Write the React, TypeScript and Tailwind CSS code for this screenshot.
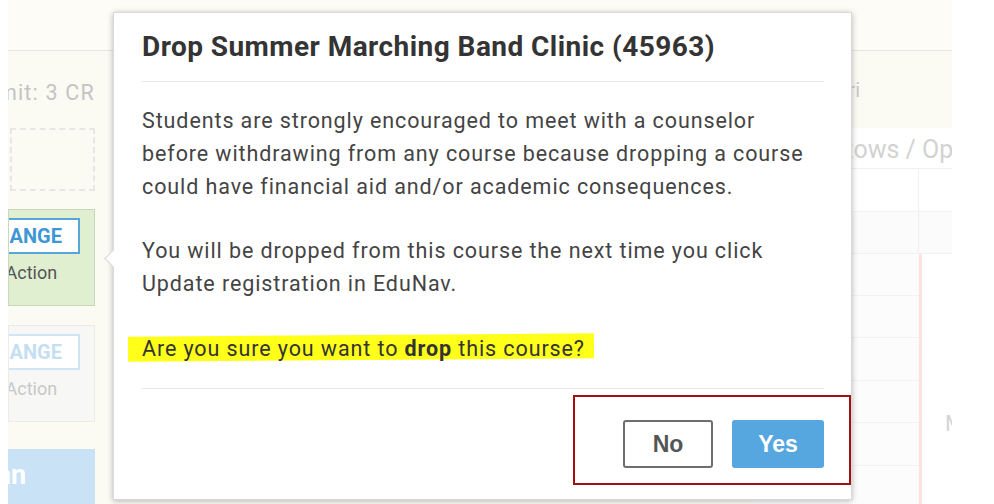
import React from "react";

export default function App() {
  return (
    <div className="relative w-[994px] h-[504px] overflow-hidden bg-white flex" style={{ fontFamily: "Roboto, 'Liberation Sans', sans-serif" }}>
      {/* left white strip */}
      <div className="w-[8px] shrink-0 bg-white" />
      {/* underlying page */}
      <div className="w-[944px] shrink-0 flex flex-col bg-[#fbfaf3] overflow-hidden">
        <div className="h-[51px] shrink-0 border-b border-[#e8e6dc] bg-[#fdfcf6]" />
        <div className="flex flex-1">
          {/* left column */}
          <div className="w-[87px] shrink-0 flex flex-col">
            <div className="h-[42px] mt-[21px] overflow-hidden flex justify-end items-center whitespace-nowrap text-[21.5px] tracking-[1.2px] text-[#c4c4c4]">
              Unit Limit: 3 CR
            </div>
            <div className="mt-[14px] ml-[2px] h-[63px] border-2 border-dashed border-[#e9e7e1]" />
            <div className="mt-[18px] h-[97px] overflow-hidden bg-[#dfefd0] border border-[#c9d8ba] flex flex-col">
              <div className="mt-[8px] ml-[-45px] w-[116px] h-[36px] shrink-0 border-2 border-[#56a6dc] bg-white flex items-center justify-center text-[20px] font-bold text-[#3f97d4] whitespace-nowrap">
                CHANGE
              </div>
              <div className="mt-[5px] ml-[-31px] text-[18px] text-[#555] whitespace-nowrap">No Action</div>
            </div>
            <div className="mt-[19px] h-[97px] overflow-hidden bg-[#f7f7f6] border border-[#ecebe8] flex flex-col">
              <div className="mt-[8px] ml-[-45px] w-[116px] h-[36px] shrink-0 border-2 border-[#cfe5f5] bg-white flex items-center justify-center text-[20px] font-bold text-[#c4dff2] whitespace-nowrap">
                CHANGE
              </div>
              <div className="mt-[5px] ml-[-31px] text-[18px] text-[#c8c8c8] whitespace-nowrap">No Action</div>
            </div>
            <div className="mt-[27px] flex-1 overflow-hidden bg-[#c9e2f5] flex items-center">
              <span className="ml-[-36px] pb-[2px] text-[27px] font-bold text-white whitespace-nowrap">Plan</span>
            </div>
          </div>
          <div className="flex-1" />
          {/* right column */}
          <div className="w-[200px] shrink-0 flex flex-col">
            <div className="h-[77px] shrink-0 flex items-center justify-end pr-[92px] text-[20px] text-[#c8c8c8] whitespace-nowrap">
              Mon Tue Wed Thu Fri
            </div>
            <div className="flex-1 bg-white flex flex-col">
              <div className="h-[40px] shrink-0 flex items-center pl-[86px] pt-[4px] text-[25px] text-[#d2d2d2] whitespace-nowrap">
                Rows / Options
              </div>
              <div className="h-[43px] shrink-0 border-t border-[#f0f0f0] flex">
                <div className="w-[167px] border-r border-[#efefef]" />
              </div>
              <div className="h-[42px] shrink-0 border-t border-[#f3f3f3] bg-[#fbfbfb] flex">
                <div className="w-[167px] border-r border-[#efefef]" />
              </div>
              <div className="flex-1 flex border-t border-[#f1f1f1]">
                <div className="w-[167px] shrink-0 flex flex-col bg-[#fcfcfc]">
                  <div className="h-[42px] border-b border-[#f2f2f2]" />
                  <div className="h-[42px] border-b border-[#f2f2f2]" />
                  <div className="h-[43px] border-b border-[#f2f2f2]" />
                  <div className="h-[42px] border-b border-[#f2f2f2]" />
                  <div className="h-[43px] border-b border-[#f2f2f2]" />
                </div>
                <div className="w-[3px] shrink-0 bg-[#fde3e0]" />
                <div className="flex-1 flex flex-col pt-[153px] pl-[23px] text-[22px] text-[#d4d4d4]">
                  M
                </div>
              </div>
            </div>
          </div>
        </div>
      </div>
      <div className="flex-1 bg-white" />

      {/* popover dialog */}
      <div className="absolute left-[113px] top-[12px] w-[739px] h-[488px] bg-white border border-[#d9d9d9] shadow-[0_1px_6px_rgba(0,0,0,0.28)] flex flex-col pl-[28px] pr-[27px]">
        <div className="absolute left-[-7px] top-[239px] w-[13px] h-[13px] bg-white border-l border-b border-[#d6d6d6] rotate-45" />
        <div className="h-[69px] shrink-0 border-b border-[#e9e9e9] flex items-end pb-[17px]">
          <h2 className="text-[28px] leading-[34px] tracking-[0.45px] font-bold text-[#343434] whitespace-nowrap">
            Drop Summer Marching Band Clinic (45963)
          </h2>
        </div>
        <div className="pt-[22px] text-[21.5px] leading-[33px] tracking-[0.9px] text-[#444]">
          <p className="whitespace-nowrap">
            Students are strongly encouraged to meet with a counselor
            <br />
            before withdrawing from any course because dropping a course
            <br />
            could have financial aid and/or academic consequences.
          </p>
          <p className="mt-[31px] whitespace-nowrap">
            You will be dropped from this course the next time you click
            <br />
            Update registration in EduNav.
          </p>
          <p className="mt-[32px] relative whitespace-nowrap">
            <span className="absolute left-[-14px] top-[3px] w-[466px] h-[25px] bg-[#ffff1a] -rotate-[0.4deg]" />
            <span className="relative text-[#333]">
              Are you sure you want to <b className="font-bold">drop</b> this course?
            </span>
          </p>
        </div>
        <div className="mt-[23px] border-t border-[#e9e9e9] flex justify-end gap-[19px] pt-[31px]" style={{ fontFamily: "'Liberation Sans', Arial, sans-serif" }}>
          <button className="w-[90px] h-[48px] bg-white border-2 border-[#6e6e6e] rounded-[3px] text-[23px] font-bold text-[#555]">
            No
          </button>
          <button className="w-[92px] h-[48px] bg-[#56a7df] rounded-[3px] text-[23px] font-bold text-white">
            Yes
          </button>
        </div>
      </div>

      {/* annotation box */}
      <div className="absolute left-[573px] top-[395px] w-[278px] h-[90px] border-2 border-[#a3100e]" />
    </div>
  );
}
